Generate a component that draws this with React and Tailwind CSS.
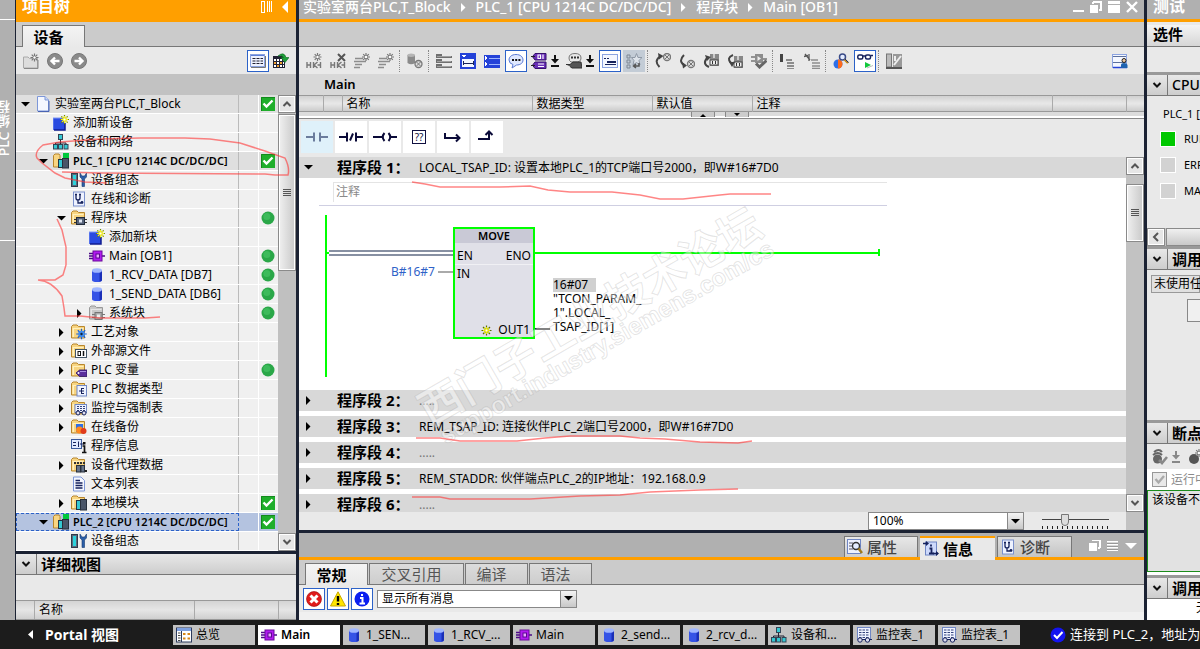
import { useState } from "react";

/* ---------- icons ---------- */

function Svg({ w = 16, h = 16, crisp = false, children }) {
  return (
    <svg
      width={w}
      height={h}
      viewBox={`0 0 ${w} ${h}`}
      fill="none"
      className="block shrink-0"
      shapeRendering={crisp ? "crispEdges" : "auto"}
      aria-hidden="true"
    >
      {children}
    </svg>
  );
}

// eight pointed "new" star
function Star({ x, y, r = 4, color = "#777", core = "#fff" }) {
  const d = r * 0.7;
  return (
    <g>
      <path
        d={`M${x} ${y - r}V${y + r}M${x - r} ${y}H${x + r}M${x - d} ${y - d}L${x + d} ${y + d}M${x - d} ${y + d}L${x + d} ${y - d}`}
        stroke={color}
        strokeWidth="1.2"
      />
      <circle cx={x} cy={y} r={r * 0.3} fill={core} />
    </g>
  );
}

function Folder({ gray = false, children }) {
  return (
    <Svg>
      <path
        d="M0.5 2.5 2 1h4l1.500 1.500H13.500V14H0.500Z"
        fill={gray ? "#c9c9c9" : "#f8d581"}
        stroke={gray ? "#999" : "#b8862c"}
      />
      <path d="M1.500 4H12.500V5H3V13H1.500Z" fill={gray ? "#e6e6e6" : "#fff0bd"} />
      {children}
    </Svg>
  );
}

const treeIcons = {
  project: (
    <Svg>
      <path d="M2.500 .500H10L13.500 4V15H2.500Z" fill="#f4f7ff" stroke="#7d97d8" />
      <path d="M10 .500V4H13.500" fill="#c9d6f7" stroke="#7d97d8" />
      <path d="M3 15.500H14V5" stroke="#4a64b4" />
    </Svg>
  ),
  add: (
    <Svg>
      <rect x="0" y="3" width="12" height="12" fill="#2a4be0" />
      <path d="M0 15V3H12" stroke="#7f97f5" />
      <path d="M1 15H12V8" stroke="#101c90" strokeWidth="1.500" />
      <Star x={11.5} y={4.500} r={4.5} color="#6f8a00" core="#ff3" />
      <Star x={11.5} y={4.500} r={3.5} color="#f5ee22" core="#fff" />
    </Svg>
  ),
  network: (
    <Svg>
      <path d="M7.500 6V9M2.500 11V9H13V11M7.500 9V11" stroke="#223" />
      <rect x="5.500" y=".500" width="4" height="5" fill="#35c8d2" stroke="#345" />
      <rect x=".500" y="10.500" width="4" height="4.500" fill="#35c8d2" stroke="#345" />
      <rect x="5.500" y="10.500" width="4" height="4.500" fill="#35c8d2" stroke="#345" />
      <rect x="11" y="10.500" width="4" height="4.500" fill="#35c8d2" stroke="#345" />
    </Svg>
  ),
  plc: (
    <Svg>
      <path d="M.500 2.500 2 1H6L7 2.500V14H.500Z" fill="#f8d581" stroke="#b8862c" />
      <rect x="5.500" y="6.500" width="4" height="8" fill="#35c8d2" stroke="#234" />
      <rect x="9.500" y="5.500" width="6" height="9.500" fill="#4a5568" stroke="#28303c" />
      <rect x="10" y="0" width="6" height="5" fill="#00c83c" />
    </Svg>
  ),
  config: (
    <Svg>
      <rect x=".500" y="1.500" width="6" height="13" fill="#5b6a7c" stroke="#2f3b49" />
      <rect x="2" y="3" width="3" height="10" fill="#2cd3dc" />
      <path d="M9 1V5L11 7V14.500H13.500V7L15.500 5V1L13.500 4H11Z" fill="#2b5fa8" stroke="#173a70" strokeWidth=".600" />
    </Svg>
  ),
  diag: (
    <Svg>
      <rect x="2.500" y="1" width="11" height="14" fill="#eef2ff" stroke="#7a90cc" />
      <path d="M5 3V7Q5 9 7 9T9 7V3M4 3.500H6M8 3.500H10M7 9V12H10" stroke="#16225c" strokeWidth="1.300" />
      <circle cx="11" cy="11.500" r="1.400" fill="#16225c" />
    </Svg>
  ),
  blocks: (
    <Folder>
      <path d="M3 9.500H16M3 12.500H16" stroke="#333" />
      <rect x="5.500" y="7.500" width="8" height="7" fill="#56637a" stroke="#222b3a" />
      <rect x="8" y="9.500" width="3" height="3" fill="#dfe6f2" />
    </Folder>
  ),
  sysblocks: (
    <Folder gray>
      <path d="M3 9.500H16M3 12.500H16" stroke="#777" />
      <rect x="6" y="7.500" width="7" height="7" fill="#aaa" stroke="#777" />
      <rect x="8" y="9.500" width="3" height="3" fill="#eee" />
    </Folder>
  ),
  ob: (
    <Svg>
      <path d="M0 5.500H5M0 8H5M0 10.500H5M12 8H16" stroke="#4b0a86" strokeWidth="1.500" />
      <rect x="4" y="3" width="9" height="10" fill="#b21af0" stroke="#6a0a9c" />
      <rect x="7" y="6" width="3.500" height="4" fill="#e9a8ff" stroke="#5a0890" />
    </Svg>
  ),
  db: (
    <Svg>
      <path d="M3 3.500V13Q3 15 8 15T13 13V3.500Z" fill="#3553e6" />
      <path d="M10.500 4V14.700Q13 14 13 13V3.500Z" fill="#1a2fb8" />
      <ellipse cx="8" cy="3.500" rx="5" ry="2.300" fill="#9fb6ff" />
    </Svg>
  ),
  tech: (
    <Folder>
      <Star x={10.5} y={10} r={5.3} color="#1d5fd0" core="#fff" />
      <circle cx="10.500" cy="10" r="3.300" fill="#3e8bf0" />
      <circle cx="10.500" cy="10" r="1.200" fill="#123" />
    </Folder>
  ),
  ext: (
    <Folder>
      <rect x="4.500" y="6.500" width="11" height="8" fill="#fff" stroke="#456" />
      <rect x="7" y="8.500" width="2.500" height="4" stroke="#111" />
      <path d="M12.500 8V13" stroke="#111" strokeWidth="1.500" />
    </Folder>
  ),
  tags: (
    <Folder>
      <path d="M5 11 8.500 8H16V14.500H8.500Z" fill="#5a2f9c" stroke="#2f1560" strokeWidth=".800" />
      <path d="M9 9.500H15" stroke="#a88be0" />
      <circle cx="7.500" cy="11" r="1" fill="#fff" />
    </Folder>
  ),
  types: (
    <Folder>
      <rect x="6" y="4.500" width="9.500" height="10.500" fill="#eef2ff" stroke="#6f86c4" />
      <path d="M8 10H10.500M10.500 7V13M10.500 7.500H13M10.500 10H13M10.500 12.500H13" stroke="#16225c" />
    </Folder>
  ),
  watch: (
    <Folder>
      <rect x="4" y="4.500" width="11.500" height="8" fill="#eef2ff" stroke="#6f86c4" />
      <path d="M6 6.500H14M6 8.500H14M6 10.500H14" stroke="#33427c" strokeDasharray="2 1" />
      <circle cx="7" cy="13" r="2" fill="#dde" stroke="#16225c" />
      <circle cx="13" cy="13" r="2" fill="#dde" stroke="#16225c" />
      <path d="M9 12.500H11" stroke="#16225c" />
    </Folder>
  ),
  backup: (
    <Folder>
      <rect x="5" y="5" width="7" height="8" fill="#2f6fe6" />
      <circle cx="8.500" cy="11" r="3.500" fill="#ff8a1f" />
      <circle cx="12.500" cy="12" r="3" fill="#e03c1c" />
    </Folder>
  ),
  info: (
    <Svg>
      <rect x=".500" y="1.500" width="10" height="9" fill="#dfe9ff" stroke="#3a5a9c" />
      <path d="M2 4.500H5M2 7.500H5M7.500 3.500V9M9 6H13" stroke="#16225c" />
      <rect x="12" y="4" width="2.500" height="2.500" fill="#111" />
      <path d="M11.500 8H13.500V14M11 14.500H15.500" stroke="#111" strokeWidth="1.700" />
    </Svg>
  ),
  proxy: (
    <Folder>
      <path d="M3 6H14" stroke="#333" strokeDasharray="2 1" strokeWidth="2" />
      <rect x="5.500" y="8.500" width="4" height="6.500" fill="#677489" stroke="#28303c" />
      <rect x="10" y="8.500" width="3.500" height="6.500" fill="#677489" stroke="#28303c" />
      <rect x="14" y="13" width="2" height="2" fill="#222" />
    </Folder>
  ),
  text: (
    <Svg>
      <path d="M2.500 1H10L13.500 4.500V15H2.500Z" fill="#f4f7ff" stroke="#7d97d8" />
      <path d="M4.500 4.500H9M4.500 7H11.500M4.500 9.500H11.500M4.500 12H11.500" stroke="#16225c" strokeWidth="1.300" />
    </Svg>
  ),
  local: (
    <Folder>
      <rect x="5.500" y="5.500" width="4" height="9" fill="#35c8d2" stroke="#234" />
      <rect x="9.500" y="4.500" width="6" height="10.500" fill="#4a5568" stroke="#28303c" />
    </Folder>
  ),
  overview: (
    <Svg>
      <rect x=".500" y="1" width="15" height="14" fill="#fff" stroke="#2c3a5c" />
      <rect x="1" y="1" width="14" height="3" fill="#7ea0e0" />
      <path d="M5.500 4V15" stroke="#2c3a5c" />
      <path d="M2 6H4.500M2 8.500H4.500M2 11H4.500M2 13.500H4.500" stroke="#444" />
      <path d="M7 7H9.500M11.500 7H14M7 11.500H9.500M11.500 11.500H14" stroke="#d8871a" strokeWidth="2" />
    </Svg>
  ),
  watchTable: (
    <Svg>
      <rect x="1.500" y=".500" width="13" height="12" fill="#eef2ff" stroke="#6f86c4" />
      <path d="M3 3H13M3 5.500H13M3 8H13M3 10.500H13" stroke="#33427c" strokeDasharray="2.500 1" />
      <circle cx="4" cy="13" r="2.200" fill="#dde" stroke="#16225c" />
      <circle cx="11.500" cy="13" r="2.200" fill="#dde" stroke="#16225c" />
      <path d="M6 12.500H9.500M14 12.500H16" stroke="#16225c" />
    </Svg>
  ),
};

function Check() {
  return (
    <Svg w={14} h={14}>
      <rect width="14" height="14" fill="#1fae2b" />
      <path d="M.500 14V.500H14" stroke="#128a1c" />
      <path d="M2.500 6.500 5.500 9.500 11.500 3.500" stroke="#fff" strokeWidth="2.400" />
    </Svg>
  );
}

function Dot() {
  return (
    <Svg w={14} h={14}>
      <circle cx="7" cy="7" r="6.500" fill="#2aa748" />
      <circle cx="5.800" cy="5.500" r="3.500" fill="#3dbb5b" />
    </Svg>
  );
}

function Arrow({ dir = "down", color = "#000" }) {
  const d = {
    down: "M0 2H9L4.500 6.500Z",
    right: "M2 0V9L6.500 4.500Z",
    left: "M7 0V9L2 4.500Z",
    up: "M0 6H9L4.500 1.500Z",
  }[dir];
  return (
    <Svg w={9} h={9}>
      <path d={d} fill={color} />
    </Svg>
  );
}

function Chevron({ dir = "down", color = "#111" }) {
  const d = {
    down: "M1.500 3 5 6.500 8.500 3",
    up: "M1.500 7 5 3.500 8.500 7",
    left: "M7 1 3 5 7 9",
  }[dir];
  return (
    <Svg w={10} h={10}>
      <path d={d} stroke={color} strokeWidth="2" />
    </Svg>
  );
}

const G = "#777";

// contact and coil of a rung, shared by the insert / delete network icons
const contact = (
  <path d="M1 9V15M1 12H4M4.500 9V15M11.500 9 8 12 11.500 15M7.500 9V15M14.500 9V15M11.500 12H14" stroke={G} strokeWidth="1.400" />
);

const lines = <path d="M1 5.500H9M0 8.500H12M1 11.500H8M0 14.500H6" stroke="#8d8d8d" strokeWidth="1.700" />;

const wheel = (x, y) => (
  <g>
    <circle cx={x} cy={y} r="3.500" fill="#ddd" stroke={G} strokeWidth="1.300" />
    <path d={`M${x - 2} ${y - 2}L${x + 2} ${y + 2}M${x - 2} ${y + 2}L${x + 2} ${y - 2}`} stroke={G} />
  </g>
);

const moduleBox = (x, y) => (
  <g>
    <rect x={x} y={y} width="9" height="12" fill="#888" />
    <rect x={x + 3} y={y} width="2" height="4" fill="#ccc" />
    <rect x={x} y={y + 6} width="8" height="5" fill="#eee" stroke="#444" />
    <path d={`M${x + 2.500} ${y + 7}v3M${x + 5.500} ${y + 7}v3`} stroke="#333" />
  </g>
);

const toolbar = [
  { id: "insert-network", icon: <Svg>{contact}<Star x={11.5} y={4} /></Svg> },
  { id: "delete-network", icon: <Svg>{contact}<path d="M8 1 15 8M15 1 8 8" stroke="#555" strokeWidth="2" /></Svg> },
  { id: "insert-row", icon: <Svg>{lines}<Star x={12} y={4} /></Svg> },
  { id: "add-row", icon: <Svg>{lines}<Star x={12} y={4} /></Svg> },
  { sep: true, id: "s1" },
  {
    id: "reset-values",
    icon: (
      <Svg>
        <path d="M.500 2V10Q4 12.500 8 10V2Z" fill="#8a8a8a" />
        <ellipse cx="4.200" cy="2.200" rx="3.800" ry="1.700" fill="#b5b5b5" />
        {wheel(11.5, 11)}
      </Svg>
    ),
  },
  { sep: true, id: "s2" },
  {
    id: "close-networks",
    icon: (
      <Svg crisp>
        <path d="M0 1H6V3H16V5H0ZM0 6H6V8H16V10H0ZM0 11H6V13H16V15H0Z" fill="#6f6f6f" />
        <path d="M1 3.500H15M1 8.500H15M1 13.500H15" stroke="#a0a0a0" />
      </Svg>
    ),
  },
  {
    id: "open-networks",
    icon: (
      <Svg crisp>
        <rect x="0" y="0" width="16" height="16" fill="#2442d8" />
        <path d="M1 2H6L3.500 4.500Z" fill="#fff" />
        <rect x="2" y="6" width="12" height="8" fill="#f2f6ff" />
        <path d="M3 8V12M3 10H13M13 8V12" stroke="#16225c" />
      </Svg>
    ),
  },
  {
    id: "all-networks",
    icon: (
      <Svg crisp>
        <rect x="0" y="2" width="16" height="13" fill="#2442d8" />
        <path d="M5 5.500H16M5 11.500H16" stroke="#9db4ff" />
        <path d="M1 3V7L4 5ZM1 9V13L4 11Z" fill="#fff" />
      </Svg>
    ),
  },
  {
    id: "comments",
    active: true,
    icon: (
      <Svg>
        <path d="M8 1.500C12.500 1.500 15 4 15 7S12.500 12 8.500 12L4 15 5 11.500Q1 10.500 1 7C1 4 3.500 1.500 8 1.500Z" fill="#dfe8ff" stroke="#5b7bd4" />
        <path d="M4 7H6M7.200 7H9.200M10.400 7H12.400" stroke="#111" strokeWidth="2" />
      </Svg>
    ),
  },
  {
    id: "absolute-operands",
    split: true,
    icon: (
      <Svg>
        <path d="M4 .500H15V7H4L1.500 3.700Z" fill="#6a2fb8" stroke="#35106c" />
        <path d="M4 9H15V15.500H4L1.500 12.200Z" fill="#6a2fb8" stroke="#35106c" />
        <path d="M7 2H9.500V5.500H7ZM12 1.500V6M7 11H13M7 13.500H13" stroke="#fff" strokeWidth="1.200" />
        <path d="M0 3.500H4M0 12.500H4" stroke="#222" />
      </Svg>
    ),
  },
  {
    id: "symbols",
    split: true,
    icon: (
      <Svg>
        <path d="M3 5Q3 .500 9 .500T15 5 9 9H5Q3 8 3 5Z" fill="#e8e8e8" stroke="#777" />
        <path d="M5 4.500H13" stroke="#333" strokeWidth="2" strokeDasharray="2 1" />
        <path d="M0 11.500H4L7 9H15L16 15H6L4 13.500" fill="#555" stroke="#333" />
      </Svg>
    ),
  },
  {
    id: "favorites",
    active: true,
    icon: (
      <Svg crisp>
        <rect x=".500" y="1.500" width="15" height="13" fill="#f4f7ff" stroke="#8ba3e0" />
        <path d="M2 5.500H4M5 5.500H7M3 11.500H14" stroke="#16225c" />
        <path d="M5 8.500H14" stroke="#16225c" strokeWidth="2" />
      </Svg>
    ),
  },
  {
    id: "goto",
    pressed: true,
    icon: (
      <Svg>
        <path d="M1 2H4V5H1ZM1 7H4V10H1ZM1 12H4V15H1Z" stroke="#7d8794" />
        <path d="M10.500 .500 12 4.500H16L13 7.500 14 12 10.500 9.500 7 12 8 7.500 5.500 4.500H9Z" fill="#dde3ea" stroke="#8f99a6" />
        <path d="M13 10V13H8M10 11 7.500 13 10 15" stroke="#555" strokeWidth="1.500" />
      </Svg>
    ),
  },
  { sep: true, id: "s3" },
  {
    id: "prev-error",
    icon: (
      <Svg>
        <path d="M4.500 14Q-1.500 8 5 3.500" stroke="#444" strokeWidth="2" />
        <path d="M3 0 8.500 3 4 6.500Z" fill="#444" />
        {wheel(12, 4)}
      </Svg>
    ),
  },
  {
    id: "next-error",
    icon: (
      <Svg>
        <path d="M5 2Q-1 8 5 12" stroke="#444" strokeWidth="2" />
        <path d="M3 9 8 12.500 4 15.500Z" fill="#444" />
        {wheel(12, 11)}
      </Svg>
    ),
  },
  {
    id: "update-call",
    icon: (
      <Svg>
        {moduleBox(7, 1)}
        <path d="M6 14Q-1 11 4 5" stroke="#444" strokeWidth="2" />
        <path d="M2 2 8 4 4 8Z" fill="#444" />
      </Svg>
    ),
  },
  {
    id: "update-all",
    icon: (
      <Svg>
        {moduleBox(7, 3)}
        <path d="M6 2Q-1 5 4 10" stroke="#444" strokeWidth="2" />
        <path d="M2 9 8 9 5 14Z" fill="#444" />
      </Svg>
    ),
  },
  {
    id: "consistency",
    icon: (
      <Svg>
        <path d="M0 4H4M0 8H4M12 6H16" stroke={G} strokeWidth="1.500" />
        <path d="M4 1H12V10H4Z" fill="#8d8d8d" />
        <path d="M6.500 3 10 5.500 6.500 8Z" fill="#eee" />
        <path d="M5 10.500 8.500 14 15.500 7.500" stroke="#666" strokeWidth="3" />
      </Svg>
    ),
  },
  { sep: true, id: "s4" },
  {
    id: "indent",
    icon: (
      <Svg crisp>
        <path d="M1.500 1V9" stroke="#444" strokeWidth="3" />
        <path d="M6 7H12M7 10H14M7 13H14M7 15.500H14" stroke="#8d8d8d" strokeWidth="2" />
      </Svg>
    ),
  },
  {
    id: "outdent",
    icon: (
      <Svg>
        <path d="M1 1 6 7M5 1V8M0 3.500 4 2.500" stroke="#555" strokeWidth="1.300" />
        <path d="M7 7H14M8 10H16M8 13H16M8 15.500H16" stroke="#8d8d8d" strokeWidth="1.700" />
      </Svg>
    ),
  },
  { sep: true, id: "s5" },
  {
    id: "search",
    icon: (
      <Svg>
        <circle cx="5" cy="11" r="4.500" fill="#2f6fe6" />
        <path d="M5 6.500A4.500 4.500 0 0 1 5 15.500Z" fill="#ff6a1a" />
        <circle cx="9.500" cy="4" r="3" fill="#e4ecff" stroke="#3b4c88" strokeWidth="1.500" />
        <path d="M11.500 6.500 15 10" stroke="#c48a1c" strokeWidth="2.400" />
        <path d="M12 6 15.500 9.500" stroke="#1f3270" />
      </Svg>
    ),
  },
  {
    id: "monitor",
    active: true,
    icon: (
      <Svg>
        <rect x=".800" y="2" width="5" height="4" rx="1.500" stroke="#16225c" strokeWidth="1.500" />
        <rect x="8.500" y="2" width="5" height="4" rx="1.500" stroke="#16225c" strokeWidth="1.500" />
        <path d="M6 3H8.500M14 2.500H16" stroke="#16225c" strokeWidth="1.500" />
        <path d="M8 9V15L14 12Z" fill="#12c83c" />
        <path d="M10 15 16 12.500" stroke="#bbb" />
      </Svg>
    ),
  },
  { sep: true, id: "s6" },
  {
    id: "layout",
    icon: (
      <Svg>
        <rect x=".500" y="1" width="5" height="13" fill="#bbb" stroke="#777" />
        <rect x="7" y="1" width="9" height="13" fill="#999" />
        <path d="M8 12 15 3M9 3V8" stroke="#eee" strokeWidth="2" />
        <path d="M0 15H16" stroke="#555" strokeWidth="2" />
      </Svg>
    ),
  },
];

/* ---------- shared pieces ---------- */

function ToolButton({ item }) {
  if (item.sep) {
    return <div className="mr-[3px] ml-px h-[22px] border-l border-dotted border-[#888]" />;
  }
  let box = "border-transparent";
  if (item.active) box = "border-[#2c62c8] bg-white";
  if (item.pressed) box = "border-[#c3ccd6] bg-[#c3ccd6]";
  return (
    <button
      type="button"
      aria-label={item.id}
      className={`flex h-[22px] shrink-0 items-center ${item.split ? "w-[35px] gap-1 pl-[3px]" : "mx-px w-[22px] justify-center border"} ${item.split ? "" : box}`}
    >
      {item.icon}
      {item.split && (
        <Svg w={8} h={12}>
          <path d="M4 0V5M0 11H8" stroke="#111" strokeWidth="2" />
          <path d="M0 4H8L4 8.500Z" fill="#111" />
        </Svg>
      )}
    </button>
  );
}

function ScrollButton({ dir }) {
  return (
    <button
      type="button"
      aria-label={`scroll ${dir}`}
      className="flex h-[18px] w-[18px] shrink-0 items-center justify-center border border-[#8a8a8a] bg-[#e6e6e6] shadow-[inset_0_0_0_1px_#fff]"
    >
      <Chevron dir={dir} color="#555" />
    </button>
  );
}

function Thumb({ className }) {
  return (
    <div
      className={`flex w-[18px] shrink-0 flex-col items-center justify-center border border-[#8a8a8a] bg-linear-to-r from-[#f0f0f0] to-[#c9c9c9] shadow-[inset_0_0_0_1px_#fff] ${className}`}
    >
      <div className="h-2 w-2 bg-[repeating-linear-gradient(#555_0_1px,transparent_1px_2px)]" />
    </div>
  );
}

function SectionHeader({ title }) {
  return (
    <div className="flex h-[21px] shrink-0 items-stretch border-b border-[#777] bg-linear-to-b from-[#e8e8e8] to-[#cdcdcd]">
      <button type="button" aria-label={title} className="flex w-[21px] shrink-0 items-center justify-center border-r border-[#777]">
        <Chevron />
      </button>
      <h2 className={`pl-1 leading-5 whitespace-nowrap ${title === "CPU" ? "text-sm font-medium" : "text-[15px] font-bold"}`}>
        {title}
      </h2>
    </div>
  );
}

/* ---------- project tree ---------- */

const tree = [
  { level: 0, icon: "project", label: "实验室两台PLC,T_Block", open: true, status: "check", shade: true },
  { level: 1, icon: "add", label: "添加新设备" },
  { level: 1, icon: "network", label: "设备和网络" },
  { level: 1, icon: "plc", label: "PLC_1 [CPU 1214C DC/DC/DC]", open: true, status: "check", shade: true, bold: true },
  { level: 2, icon: "config", label: "设备组态" },
  { level: 2, icon: "diag", label: "在线和诊断" },
  { level: 2, icon: "blocks", label: "程序块", open: true, status: "dot" },
  { level: 3, icon: "add", label: "添加新块" },
  { level: 3, icon: "ob", label: "Main [OB1]", status: "dot" },
  { level: 3, icon: "db", label: "1_RCV_DATA [DB7]", status: "dot" },
  { level: 3, icon: "db", label: "1_SEND_DATA [DB6]", status: "dot" },
  { level: 3, icon: "sysblocks", label: "系统块", open: false, status: "dot" },
  { level: 2, icon: "tech", label: "工艺对象", open: false },
  { level: 2, icon: "ext", label: "外部源文件", open: false },
  { level: 2, icon: "tags", label: "PLC 变量", open: false, status: "dot" },
  { level: 2, icon: "types", label: "PLC 数据类型", open: false },
  { level: 2, icon: "watch", label: "监控与强制表", open: false },
  { level: 2, icon: "backup", label: "在线备份", open: false },
  { level: 2, icon: "info", label: "程序信息" },
  { level: 2, icon: "proxy", label: "设备代理数据", open: false },
  { level: 2, icon: "text", label: "文本列表" },
  { level: 2, icon: "local", label: "本地模块", open: false, status: "check" },
  { level: 1, icon: "plc", label: "PLC_2 [CPU 1214C DC/DC/DC]", open: true, status: "check", bold: true, selected: true },
  { level: 2, icon: "config", label: "设备组态" },
];

const indent = ["pl-px", "pl-[19px]", "pl-[37px]", "pl-[55px]"];

function TreeRow({ node }) {
  const bg = node.selected ? "bg-[#b4c3e0]" : node.shade ? "bg-[#dfdfdf]" : "bg-[#f0f0f0]";
  return (
    <li className={`grid h-[19px] grid-cols-[1fr_20px_19px] border-b border-white ${bg}`}>
      <div
        className={`flex items-center ${indent[node.level]} ${node.selected ? "outline-1 -outline-offset-1 outline-[#2c62c8] outline-dashed" : "border-r border-[#bbb]"}`}
      >
        <span className="flex w-4 shrink-0 justify-center">
          {node.open !== undefined && <Arrow dir={node.open ? "down" : "right"} />}
        </span>
        <span className="mr-1 ml-0.5">{treeIcons[node.icon]}</span>
        <span className={`leading-[18px] whitespace-nowrap ${node.bold ? "text-[11px] font-semibold" : "text-xs"}`}>
          {node.label}
        </span>
      </div>
      <div className="border-r border-white" />
      <div className="flex items-center justify-center pr-0.5">
        {node.status === "check" && <Check />}
        {node.status === "dot" && <Dot />}
      </div>
    </li>
  );
}

function ProjectTree() {
  return (
    <aside className="flex w-[284px] shrink-0 flex-col border-r-3 border-l border-[#1b2233]">
      <header className="flex h-[22px] shrink-0 items-start justify-between bg-[#ff9f00] pr-[7px] pl-[6px] text-white">
        <h1 className="text-base leading-3 font-bold">项目树</h1>
        <div className="flex gap-2 pt-px">
          <Svg w={12} h={12} crisp>
            <path d="M.500 .500H3.500V11H.500ZM6 0V11M8 0V11M10 0V11" stroke="#fff" />
          </Svg>
          <Svg w={8} h={12}>
            <path d="M7 0V12L1 6Z" fill="#fff" />
          </Svg>
        </div>
      </header>
      <div className="flex h-[25px] shrink-0 items-end border-b border-[#777] bg-[#cbcbcb] pl-1.5">
        <button type="button" className="-mb-px h-[22px] w-[63px] border border-b-0 border-[#777] bg-linear-to-b from-[#f4f4f4] to-[#e9e9e9] pr-2.5 text-[15px] leading-5 font-bold">
          设备
        </button>
      </div>
      <div className="flex h-[27px] shrink-0 items-center gap-2 bg-[#e9e9e9] pr-[7px] pl-[7px]">
        <button type="button" aria-label="new folder">
          <Svg>
            <path d="M.500 4H5L6.500 5.500H14.500V15H.500Z" fill="#ddd" stroke="#aaa" />
            <path d="M1 15.500H15V7" stroke="#888" />
            <Star x={11.5} y={4.500} r={4} />
          </Svg>
        </button>
        <button type="button" aria-label="back">
          <Svg>
            <circle cx="8" cy="8" r="7.500" fill="#8a8a8a" stroke="#777" />
            <path d="M12.500 8H6M8 4.500 4.500 8 8 11.500" stroke="#fff" strokeWidth="2.400" />
          </Svg>
        </button>
        <button type="button" aria-label="forward">
          <Svg>
            <circle cx="8" cy="8" r="7.500" fill="#8a8a8a" stroke="#777" />
            <path d="M3.500 8H10M8 4.500 11.500 8 8 11.500" stroke="#fff" strokeWidth="2.400" />
          </Svg>
        </button>
        <button type="button" aria-label="details" className="ml-auto flex h-[22px] w-[22px] items-center justify-center border border-[#2c62c8] bg-white">
          <Svg>
            <rect x=".500" y="1.500" width="14" height="12" fill="#eef2ff" stroke="#8ba3e0" />
            <path d="M2.500 5.500H13M2.500 8H13M2.500 10.500H13" stroke="#223" strokeDasharray="3 1" />
            <path d="M1 2.500H14" stroke="#5f80d8" />
            <path d="M1 14.500H15.500V3" stroke="#777" />
          </Svg>
        </button>
        <button type="button" aria-label="open table" className="-ml-1">
          <Svg>
            <rect x="0" y="3" width="12" height="12" fill="#223" />
            <path d="M1 7H11M1 10H11M1 13H11" stroke="#fff" strokeWidth="2" strokeDasharray="2 1" />
            <path d="M1 10H3M4 13H6M7 10H9" stroke="#f0a030" strokeWidth="2" />
            <path d="M5 3Q11 -2 13 4.500H16L12 9.500 8 4.500H10.500Q9 2 5 3Z" fill="#1fa03a" stroke="#0c6a20" strokeWidth=".600" />
          </Svg>
        </button>
      </div>
      <div className="h-[21px] shrink-0 bg-[#c2c2c2]" />
      <div className="flex shrink-0 bg-[#c0c0c0]">
        <ul className="min-w-0 flex-1">
          {tree.map((node, i) => (
            <TreeRow key={i} node={node} />
          ))}
        </ul>
        <div className="flex w-[18px] flex-col gap-px">
          <ScrollButton dir="up" />
          <Thumb className="h-[157px]" />
          <div className="mt-auto">
            <ScrollButton dir="down" />
          </div>
        </div>
      </div>
      <section className="flex flex-1 flex-col border-t-3 border-[#1b2233] bg-[#e9e9e9]">
        <SectionHeader title="详细视图" />
        <div className="mt-auto flex h-5 border-y border-[#999] bg-linear-to-b from-[#d4d4d4] via-[#e6e6e6] to-[#cfcfcf] text-xs leading-[18px]">
          <div className="w-[19px] border-r border-[#aaa]" />
          <div className="w-40 border-r border-[#aaa] pl-1">名称</div>
          <div className="w-[84px] border-r border-[#aaa]" />
        </div>
      </section>
    </aside>
  );
}

/* ---------- editor ---------- */

const favorites = [
  { id: "open contact", d: "M1 7H9M9 2.500V11.500M15 2.500V11.500M15 7H23", active: true },
  { id: "closed contact", d: "M0 7H8M8 2.500V11.500M17 2.500V11.500M17 7H24M11 10.500 14 3.500" },
  { id: "coil", d: "M0 7H9M11.500 3Q8 7 11.500 11M15.500 3Q19 7 15.500 11M18 7H24" },
  { id: "box", box: true },
  { id: "open branch", d: "M4 3V8H17M15 4.500 18.500 8 15 11.500" },
  { id: "close branch", d: "M3 9H14V2M10.500 5 14 1.500 17.500 5" },
];

function Favorites() {
  return (
    <div className="flex h-[38px] shrink-0 gap-0.5 bg-[#e9e9e9] pt-0.5 pl-0.5">
      {favorites.map((f) => (
        <button
          key={f.id}
          type="button"
          aria-label={f.id}
          className={`flex h-8 w-8 items-center justify-center ${f.active ? "bg-[#dff1fa]" : "bg-white"}`}
        >
          {f.box ? (
            <span className="border border-[#101040] px-0.5 text-[10px] leading-3 text-[#101040]">??</span>
          ) : (
            <Svg w={24} h={14}>
              <path d={f.d} stroke={f.active ? "#6b7c9c" : "#0a0a38"} strokeWidth="2" />
            </Svg>
          )}
        </button>
      ))}
    </div>
  );
}

function NetworkHeader({ no, title, open }) {
  return (
    <div className="flex h-[21px] shrink-0 items-center bg-[#d8d8d8] pl-[5px]">
      <Arrow dir={open ? "down" : "right"} />
      <h3 className="ml-6 w-20 text-[15px] leading-[21px] font-bold whitespace-nowrap">程序段 {no}：</h3>
      <p className={`ml-0.5 text-xs whitespace-nowrap ${title ? "" : "text-[#777]"}`}>{title || "....."}</p>
    </div>
  );
}

// ladder rung; nodes sit on a free canvas
function Ladder() {
  return (
    <div className="relative h-[212px] shrink-0 bg-white text-xs leading-[14px]">
      <div className="absolute top-1 left-[34px] h-5 w-[554px] border-t border-l border-[#e4e4e4] pl-0.5 text-[#8a8a8a]">
        <span className="leading-[18px]">注释</span>
      </div>
      <svg width="600" height="212" viewBox="0 0 600 212" fill="none" shapeRendering="crispEdges" className="absolute top-0 left-0">
        <path d="M20 27.500H588" stroke="#cfcfe2" />
        <path d="M27 37V199" stroke="#0f0" strokeWidth="2" />
        <path d="M28 75H30M236 75H580M580 71V78" stroke="#0f0" strokeWidth="2" />
        <path d="M30 73H154M30 77H154" stroke="#8790a2" strokeWidth="2" />
        <path d="M139 94H154" stroke="#aaa" strokeWidth="2" />
        <path d="M236 151H251" stroke="#222" strokeWidth="2" />
      </svg>
      <span className="absolute top-[87px] left-[92px] text-[#2f62c8]">B#16#7</span>
      <div className="absolute top-[49px] left-[154px] h-[112px] w-[82px] border-2 border-[#0f0] bg-[#e0e0e8]">
        <div className="bg-[#c9c9d6] text-center text-[11px] font-semibold">MOVE</div>
        <div className="flex justify-between border-b border-[#f0f0f4] px-0.5 pt-1.5 pb-px">
          <span>EN</span>
          <span>ENO</span>
        </div>
        <div className="px-0.5 pt-0.5">IN</div>
        <div className="absolute right-[3px] bottom-0 flex items-center gap-1.5">
          <Svg w={11} h={11}>
            <Star x={5.5} y={5.5} r={5} color="#5c7000" core="#ff0" />
            <Star x={5.5} y={5.5} r={3.5} color="#f2ee00" core="#fff" />
          </Svg>
          <span>OUT1</span>
        </div>
      </div>
      <div className="absolute top-[100px] left-[254px]">
        <div className="w-[43px] bg-[#d0d0d0]">16#07</div>
        <div>"TCON_PARAM_</div>
        <div>1".LOCAL_</div>
        <div>TSAP_ID[1]</div>
      </div>
    </div>
  );
}

function Watermark() {
  return (
    <svg
      width="500"
      height="340"
      viewBox="0 0 500 340"
      className="pointer-events-none absolute top-0 left-[80px]"
      fill="#fff"
      fillOpacity=".45"
      stroke="#888"
      strokeOpacity=".22"
      fontWeight="700"
    >
      <g transform="translate(51 270) rotate(-30)">
        <text x="0" y="0" fontSize="43" fontFamily="'Noto Sans CJK SC', sans-serif">西门子工业技术论坛</text>
        <text x="5" y="23" fontSize="24" fontFamily="'Liberation Sans', sans-serif">support.industry.siemens.com/cs</text>
      </g>
    </svg>
  );
}

const columns = [
  { width: 24 },
  { width: 19 },
  { name: "名称", width: 190 },
  { name: "数据类型", width: 120 },
  { name: "默认值", width: 100 },
  { name: "注释", width: 300 },
  { width: 74 },
  {},
];

const networks = [
  { no: 2 },
  { no: 3, title: "REM_TSAP_ID: 连接伙伴PLC_2端口号2000，即W#16#7D0" },
  { no: 4 },
  { no: 5, title: "REM_STADDR: 伙伴端点PLC_2的IP地址：192.168.0.9" },
  { no: 6 },
];

function SelectBox({ id, label, options, className }) {
  const [value, setValue] = useState(options[0]);
  return (
    <div className={`relative ${className}`}>
      <label htmlFor={id} className="sr-only">{label}</label>
      <select
        id={id}
        value={value}
        onChange={(e) => setValue(e.target.value)}
        className="block h-[18px] w-full appearance-none border border-[#888] bg-white pl-1 text-xs leading-4"
      >
        {options.map((o) => (
          <option key={o}>{o}</option>
        ))}
      </select>
      <span className="pointer-events-none absolute top-0 right-0 flex h-[18px] w-[17px] items-center justify-center border border-[#888] bg-linear-to-b from-[#f4f4f4] to-[#c8c8c8]">
        <Arrow />
      </span>
    </div>
  );
}

function Breadcrumb() {
  const path = ["实验室两台PLC,T_Block", "PLC_1 [CPU 1214C DC/DC/DC]", "程序块", "Main [OB1]"];
  return (
    <nav className="flex items-center text-sm leading-[14px] font-medium whitespace-nowrap text-white">
      {path.map((p, i) => (
        <span key={p} className="flex items-center">
          {i > 0 && (
            <span className="mx-2">
              <Arrow dir="right" color="#fff" />
            </span>
          )}
          {p}
        </span>
      ))}
    </nav>
  );
}

function Editor() {
  const [zoom, setZoom] = useState(33);
  return (
    <section className="flex shrink-0 flex-col bg-white">
      <header className="flex h-[22px] items-start justify-between border-b-3 border-[#ff9f00] bg-[#b0b0b0] pr-1.5 pl-1">
        <Breadcrumb />
        <div className="flex gap-1.5 pt-px">
          <Svg w={12} h={12} crisp><path d="M1 10H12" stroke="#fff" strokeWidth="2" /></Svg>
          <Svg w={12} h={12} crisp>
            <path d="M0 4H8V12H0Z" fill="#fff" />
            <path d="M3 1H11V9H9M3 1V3" stroke="#fff" strokeWidth="2" />
          </Svg>
          <Svg w={12} h={12} crisp><path d="M0 0H12V3H0ZM0 4H12V12H0Z" fill="#fff" /></Svg>
          <Svg w={12} h={12}><path d="M1 1 11 11M11 1 1 11" stroke="#fff" strokeWidth="2.400" /></Svg>
        </div>
      </header>
      <div className="h-[25px] border-b border-[#777] bg-[#cbcbcb]" />
      <div className="flex h-[27px] items-center bg-[#e9e9e9] pr-4 pl-[3px]">
        {toolbar.map((item) => (
          <ToolButton key={item.id} item={item} />
        ))}
        <button type="button" aria-label="user settings" className="ml-auto">
          <Svg>
            <rect x=".500" y="1.500" width="14" height="13" fill="#f4f7ff" stroke="#8ba3e0" />
            <path d="M1 3.500H14M1 9.500H14" stroke="#5b6f9c" />
            <path d="M1 14.500H15" stroke="#2442d8" strokeWidth="1.500" />
            <circle cx="12" cy="7.500" r="2" fill="#f0c9a0" stroke="#222" />
            <path d="M9 15V12Q9 10 12 10T15.500 12V15Z" fill="#1f62b0" />
          </Svg>
        </button>
      </div>
      <h2 className="h-[21px] bg-[#d8d8d8] pl-[25px] text-[13px] leading-[21px] font-semibold">Main</h2>
      <table className="w-full table-fixed border-y border-[#999] bg-linear-to-b from-[#cfcfcf] via-[#e8e8e8] to-[#cacaca] text-xs">
        <colgroup>
          {columns.map((c, i) => (
            <col key={i} style={{ width: c.width }} />
          ))}
        </colgroup>
        <thead>
          <tr>
            {columns.map((c, i) => (
              <th key={i} className="h-[15px] border-r border-[#aaa] py-0 pl-1 text-left leading-[15px] font-normal last:border-r-0">
                {c.name}
              </th>
            ))}
          </tr>
        </thead>
      </table>
      <div className="flex h-[7px] items-start justify-center gap-2.5 border-b border-[#888] bg-[#dcdcdc] pr-1 shadow-[inset_0_-2px_0_#fff]">
        <button type="button" aria-label="collapse interface" className="flex h-[5px] w-6 items-center justify-center overflow-hidden border-x border-[#888] bg-[#ccc]">
          <Svg w={6} h={4}><path d="M0 4H6L3 1Z" fill="#000" /></Svg>
        </button>
        <button type="button" aria-label="expand interface" className="flex h-[5px] w-6 items-center justify-center overflow-hidden border-x border-[#888] bg-[#ccc]">
          <Svg w={6} h={4}><path d="M0 0H6L3 3Z" fill="#000" /></Svg>
        </button>
      </div>
      <Favorites />
      <div className="flex bg-[#c2c2c2]">
        <div className="relative min-w-0 flex-1">
          <div className="flex h-[355px] flex-col overflow-hidden bg-white">
            <NetworkHeader no={1} open title="LOCAL_TSAP_ID: 设置本地PLC_1的TCP端口号2000，即W#16#7D0" />
            <Ladder />
            <div className="flex flex-col gap-[5px]">
              {networks.map((n) => (
                <NetworkHeader key={n.no} no={n.no} title={n.title} />
              ))}
            </div>
          </div>
          <Watermark />
          <div className="flex h-[18px] items-center justify-end gap-[18px] bg-[#e9e9e9] pr-[17px]">
            <SelectBox id="zoom" label="缩放" options={["100%", "75%", "50%"]} className="w-[156px]" />
            <div className="w-[67px]">
              <input
                type="range"
                aria-label="zoom level"
                value={zoom}
                onChange={(e) => setZoom(e.target.value)}
                className="block h-[13px] w-full appearance-none bg-[linear-gradient(#444,#444)] bg-size-[100%_1px] bg-center bg-no-repeat [&::-webkit-slider-thumb]:h-3 [&::-webkit-slider-thumb]:w-2 [&::-webkit-slider-thumb]:appearance-none [&::-webkit-slider-thumb]:rounded-b-full [&::-webkit-slider-thumb]:border [&::-webkit-slider-thumb]:border-[#777] [&::-webkit-slider-thumb]:bg-[#ddd]"
              />
              <div className="h-[3px] bg-[repeating-linear-gradient(90deg,#222_0_1px,transparent_1px_5px)]" />
            </div>
          </div>
        </div>
        <div className="flex w-[18px] flex-col">
          <ScrollButton dir="up" />
          <Thumb className="mt-[9px] h-[58px]" />
          <div className="mt-auto mb-[18px]">
            <ScrollButton dir="down" />
          </div>
        </div>
      </div>
    </section>
  );
}

/* ---------- inspector ---------- */

function Inspector() {
  const [tab, setTab] = useState("常规");
  return (
    <section className="flex flex-1 flex-col border-t-3 border-[#1b2233] bg-[#f0f0f0]">
      <div className="flex h-[27px] shrink-0 items-end justify-end gap-0.5 border-b-3 border-[#ff9f00] bg-[#b0b0b0] text-[15px] leading-5">
        <button type="button" className="flex h-[21px] w-[74px] items-center gap-1 border border-b-0 border-[#777] bg-linear-to-b from-[#e8e8e8] to-[#cfcfcf] pl-0.5 font-medium text-[#444]">
          <Svg>
            <rect x=".500" y=".500" width="13" height="14" fill="#eef2ff" stroke="#6f86c4" />
            <path d="M2 4H6M2 7H6M2 10H6" stroke="#556" />
            <circle cx="9" cy="7" r="3.500" fill="#e4ecff" stroke="#333" strokeWidth="1.400" />
            <path d="M11.500 9.500 15 14" stroke="#a07a1c" strokeWidth="2.400" />
          </Svg>
          属性
        </button>
        <button type="button" className="-mb-[3px] flex h-6 w-[75px] items-center gap-1 border-t-2 border-[#ff9f00] bg-[#e9e9e9] pl-[3px] font-bold">
          <Svg>
            <rect x="2.500" y="1" width="11" height="13" fill="#cdd9fb" stroke="#6f86c4" />
            <path d="M0 2.500H4M10 12.500H15" stroke="#16225c" strokeWidth="1.500" />
            <path d="M3 0 6 2.500 3 5ZM13 10 16 12.500 13 15Z" fill="#16225c" />
            <path d="M8 3.500V5.500M6.500 7.500H8.500V12M6 12.500H11" stroke="#16225c" strokeWidth="1.800" />
          </Svg>
          信息
        </button>
        <button type="button" className="flex h-[21px] w-[75px] items-center gap-1 border border-b-0 border-[#777] bg-linear-to-b from-[#dedede] to-[#c4c4c4] pl-0.5 font-medium text-[#444]">
          {treeIcons.diag}
          诊断
        </button>
        <div className="flex w-[70px] gap-1.5 self-center pt-0.5 pl-[15px]">
          <Svg w={12} h={12} crisp>
            <path d="M0 3H8V11H0Z" fill="#fff" />
            <path d="M3 .500H11V8M11 8H9" stroke="#fff" strokeWidth="1.500" />
          </Svg>
          <Svg w={12} h={12} crisp>
            <path d="M0 1H11V11H0Z" fill="#d8d8d8" />
            <path d="M0 1.500H11M0 4.500H11M0 7.500H11M0 10.500H11" stroke="#fff" />
            <path d="M0 3.500H11M0 6.500H11M0 9.500H11" stroke="#999" />
          </Svg>
          <Svg w={12} h={12}><path d="M0 3H12L6 9Z" fill="#fff" /></Svg>
        </div>
      </div>
      <div className="flex h-[25px] shrink-0 items-end gap-px border-b border-[#777] bg-[#cbcbcb] pl-1.5 text-[15px] leading-5">
        {["常规", "交叉引用", "编译", "语法"].map((t) => (
          <button
            key={t}
            type="button"
            onClick={() => setTab(t)}
            className={`border border-b-0 border-[#777] ${t.length > 2 ? "w-[95px]" : "w-[63px]"} ${
              t === tab
                ? "-mb-px h-[22px] bg-linear-to-b from-[#f4f4f4] to-[#e9e9e9] pr-2.5 font-bold"
                : "h-[21px] bg-linear-to-b from-[#dcdcdc] to-[#cdcdcd] pr-2.5 text-[#555]"
            }`}
          >
            {t}
          </button>
        ))}
      </div>
      <div className="flex h-[27px] shrink-0 items-center gap-0.5 bg-[#e9e9e9] pl-1">
        <button type="button" aria-label="errors" className="flex h-[22px] w-[22px] items-center justify-center border border-[#2c62c8] bg-white">
          <Svg>
            <circle cx="8" cy="8" r="7.500" fill="#e01b1b" stroke="#900" strokeWidth=".600" />
            <path d="M4.500 4.500 11.500 11.500M11.500 4.500 4.500 11.500" stroke="#fff" strokeWidth="3" />
          </Svg>
        </button>
        <button type="button" aria-label="warnings" className="flex h-[22px] w-[22px] items-center justify-center border border-[#2c62c8] bg-white">
          <Svg>
            <path d="M8 .800 15.500 15H.500Z" fill="#ffe600" stroke="#c8a800" />
            <path d="M8 5V10.500M8 12V14" stroke="#000" strokeWidth="2.400" />
          </Svg>
        </button>
        <button type="button" aria-label="information" className="flex h-[22px] w-[22px] items-center justify-center border border-[#2c62c8] bg-white">
          <Svg>
            <circle cx="8" cy="8" r="7.500" fill="#0b1ff0" />
            <path d="M8 3V5M6 7H8.500V12M5.500 12.500H11" stroke="#fff" strokeWidth="2" />
          </Svg>
        </button>
        <SelectBox id="messages" label="消息" options={["显示所有消息", "仅显示错误"]} className="ml-0.5 w-[200px]" />
      </div>
    </section>
  );
}

/* ---------- task card ---------- */

function TaskCard() {
  return (
    <aside className="flex w-14 shrink-0 flex-col overflow-hidden border-l-3 border-[#1b2233] bg-[#e9e9e9] whitespace-nowrap">
      <header className="h-[22px] shrink-0 border-b-3 border-[#ff9f00] bg-[#b0b0b0] pl-1.5 text-base leading-3 font-bold text-white">测试</header>
      <h2 className="mt-[3px] h-[22px] shrink-0 border-b border-[#777] bg-linear-to-b from-[#f4f4f4] to-[#d6d6d6] pl-1.5 text-[15px] leading-[18px] font-bold">选件</h2>
      <div className="h-7 shrink-0 border-b-3 border-[#999]" />
      <SectionHeader title="CPU" />
      <div className="flex h-[132px] shrink-0 flex-col pt-2.5 pl-[13px] text-[11px] leading-4">
        <p className="pb-[9px] pl-[3px]">PLC_1 [CPU]</p>
        {["RUN", "ERROR", "MAINT"].map((s) => (
          <div key={s} className="flex h-[26px] items-start gap-2">
            <span className={`h-4 w-4 shrink-0 border border-white ${s === "RUN" ? "bg-[#00c800]" : "bg-[#d2d2d2]"}`} />
            {s}
          </div>
        ))}
      </div>
      <div className="flex h-[21px] shrink-0 gap-px border-b-3 border-[#999] bg-[#c2c2c2]">
        <ScrollButton dir="left" />
        <div className="h-[18px] flex-1 border border-r-0 border-[#8a8a8a] bg-linear-to-b from-[#f0f0f0] to-[#c9c9c9]" />
      </div>
      <SectionHeader title="调用环境" />
      <div className="flex h-[153px] shrink-0 flex-col gap-1.5 border-b-3 border-[#999] pt-[5px] pl-1">
        <p className="h-[18px] border border-[#999] bg-[#e0e0e0] pl-0.5 text-xs leading-4">未使用任何</p>
        <button type="button" aria-label="change" className="ml-9 h-[23px] w-16 border border-[#888] bg-[#f0f0f0]" />
      </div>
      <SectionHeader title="断点" />
      <div className="flex h-[25px] shrink-0 items-center gap-1 pl-[5px]">
        <Svg>
          <path d="M2 3Q7 -1 10 3M1 6Q6 2 10 6" stroke="#666" strokeWidth="2" />
          <circle cx="5.500" cy="10" r="4.500" fill="#666" />
          <path d="M7 11 10 14 15 8" stroke="#888" strokeWidth="2.600" />
        </Svg>
        <Svg w={8} h={12}>
          <path d="M4 0V5M0 11H8" stroke="#888" strokeWidth="2" />
          <path d="M0 4H8L4 8.500Z" fill="#888" />
        </Svg>
        <span className="ml-1">
          <Svg>
            <circle cx="6" cy="10" r="5" fill="#555" />
            <Star x={11} y={4} />
          </Svg>
        </span>
      </div>
      <label className="flex h-[21px] shrink-0 items-center gap-1 bg-white pl-[5px] text-xs text-[#8a8a8a]">
        <span className="relative">
          <input
            type="checkbox"
            defaultChecked
            disabled
            className="block h-[15px] w-[15px] appearance-none border border-[#999] bg-[#e9e9e9]"
          />
          <svg width="15" height="15" viewBox="0 0 15 15" className="pointer-events-none absolute top-0 left-0" fill="none">
            <path d="M3.500 7 6.500 10.500 12 4" stroke="#aaa" strokeWidth="2.400" />
          </svg>
        </span>
        运行中
      </label>
      <div className="h-[82px] shrink-0 border border-r-0 border-[#1c8c1c] bg-[#e2e2e2] pl-1 text-xs leading-[18px]">该设备不支持</div>
      <div className="h-[6px] shrink-0 border-b-3 border-[#999] bg-white" />
      <SectionHeader title="调用层级" />
      <div className="flex-1 bg-white pl-[49px] text-xs leading-[18px]">无</div>
    </aside>
  );
}

/* ---------- task bar ---------- */

const openEditors = [
  { icon: "overview", label: "总览" },
  { icon: "ob", label: "Main", active: true },
  { icon: "db", label: "1_SEN..." },
  { icon: "db", label: "1_RCV_..." },
  { icon: "ob", label: "Main" },
  { icon: "db", label: "2_send..." },
  { icon: "db", label: "2_rcv_d..." },
  { icon: "network", label: "设备和..." },
  { icon: "watchTable", label: "监控表_1" },
  { icon: "watchTable", label: "监控表_1" },
];

function TaskBar() {
  return (
    <footer className="flex h-[29px] shrink-0 items-center overflow-hidden bg-[#1c1c1c] whitespace-nowrap text-white">
      <button type="button" className="flex w-[173px] shrink-0 items-center gap-2.5 pl-[26px] text-sm font-bold">
        <Arrow dir="left" color="#fff" />
        Portal 视图
      </button>
      <div className="flex gap-[3px]">
        {openEditors.map((e, i) => (
          <button
            key={i}
            type="button"
            className={`flex h-5 w-[82px] items-center gap-1 overflow-hidden pl-[3px] text-xs text-black ${
              e.active ? "bg-white font-semibold" : "bg-[#c2c2c2]"
            }`}
          >
            {treeIcons[e.icon]}
            {e.label}
          </button>
        ))}
      </div>
      <p className="ml-[30px] flex items-center gap-1 text-[13px]">
        <Svg>
          <circle cx="8" cy="8" r="7.500" fill="#1414f0" />
          <path d="M4 8 7 11 12.500 5" stroke="#fff" strokeWidth="2" />
        </Svg>
        连接到 PLC_2，地址为
      </p>
    </footer>
  );
}

/* ---------- pen marks drawn over the window ---------- */

const marks = [
  "M62 172 100 173 265 174 275 175 288 175Q290 168 285 158L265 151 240 143 210 139 185 138H140L100 139 60 142 43 145Q34 152 37 158L42 163 55 173 65 178 85 182 107 183",
  "M57 219 62 230 66 247V265L63 275 55 280 38 280Q52 281 62 296L64 308 65 316H80L100 318H145L160 317",
  "M412 182 425 184 440 187H500L530 186 548 190 570 192H612L640 195 660 199H683L720 195 730 194H771",
  "M416 438H440L460 441H517L545 438 570 436H620L640 438 665 439 700 442 738 443 752 441",
  "M412 497H440L450 499H530L580 496 620 495 650 492 700 490 738 489",
];

export default function App() {
  return (
    <div className="relative flex h-screen flex-col overflow-hidden bg-[#1b2233] font-['Noto_Sans','Noto_Sans_CJK_SC',sans-serif] text-black">
      <div className="flex min-h-0 flex-1">
        <div className="w-[15px] shrink-0 overflow-hidden bg-[#b0b0b0]">
          <div className="h-5 border-b border-white" />
          <div className="flex h-[221px] items-start border-b border-white pt-20">
            <span className="-ml-1.5 rotate-180 text-sm leading-5 font-medium text-white [writing-mode:vertical-rl]">PLC 编程</span>
          </div>
        </div>
        <ProjectTree />
        <main className="flex min-w-0 flex-1 flex-col">
          <Editor />
          <Inspector />
        </main>
        <TaskCard />
      </div>
      <TaskBar />
      <svg width="1200" height="649" viewBox="0 0 1200 649" fill="none" className="pointer-events-none absolute top-0 left-0">
        {marks.map((d) => (
          <path key={d} d={d} stroke="#f33" strokeOpacity=".6" strokeWidth="1.500" />
        ))}
      </svg>
    </div>
  );
}
